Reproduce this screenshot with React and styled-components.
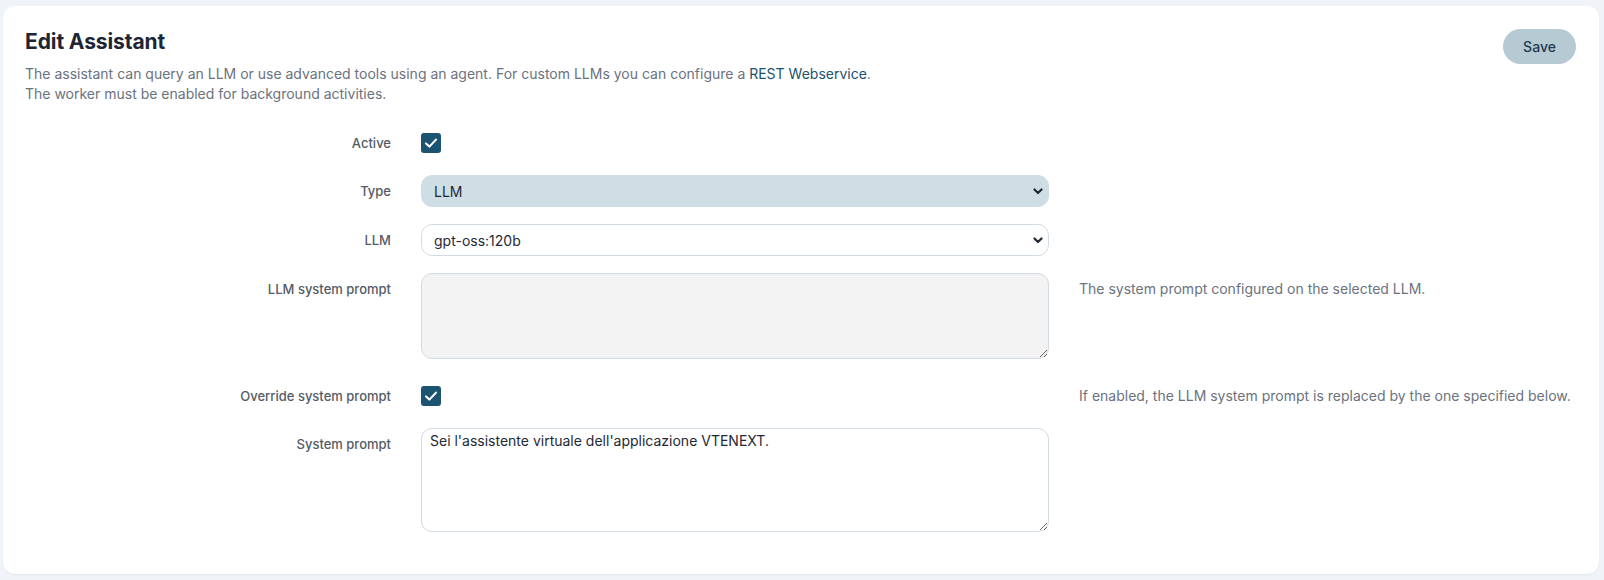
import React from 'react';
import styled, { createGlobalStyle } from 'styled-components';

const GlobalStyle = createGlobalStyle`
  html, body {
    margin: 0;
    padding: 0;
    background: #f0f3f7;
    font-family: Inter, "Noto Sans", sans-serif;
  }
`;

const Page = styled.div`
  padding: 6px 5px 6px 3px;
`;

const Card = styled.div`
  background: #ffffff;
  border-radius: 12px;
  box-shadow: 0 1px 2px rgba(15, 23, 42, 0.06);
  padding: 22px 20px 37px 22px;
  min-height: 509px;
`;

const Header = styled.div`
  display: flex;
  justify-content: space-between;
  align-items: flex-start;
`;

const Title = styled.h1`
  margin: 0 0 8px 0;
  font-size: 21px;
  line-height: 28px;
  font-weight: 700;
  color: #1e2533;
  letter-spacing: -0.1px;
`;

const Description = styled.p`
  margin: 0;
  font-size: 14px;
  line-height: 20px;
  color: #6b7280;
`;

const Link = styled.a`
  color: #1b5370;
  text-decoration: none;
`;

const SaveButton = styled.button`
  margin-top: 1px;
  margin-right: 3px;
  width: 73px;
  height: 35px;
  border: none;
  border-radius: 18px;
  background: #b5cad3;
  color: #1d3b50;
  font-family: Inter, sans-serif;
  font-size: 14px;
  font-weight: 500;
  cursor: pointer;
`;

const Form = styled.div`
  display: grid;
  grid-template-columns: 366px 628px 1fr;
  column-gap: 30px;
  row-gap: 17px;
  margin-top: 24px;
`;

const Label = styled.div`
  text-align: right;
  font-size: 13px;
  font-weight: 500;
  color: #555b66;
  line-height: ${(p) => p.$lh || 32}px;
`;

const Field = styled.div`
  display: flex;
  align-items: ${(p) => (p.$center ? 'center' : 'flex-start')};
  height: ${(p) => (p.$h ? `${p.$h}px` : 'auto')};
  padding-bottom: ${(p) => p.$pb || 0}px;
`;

const Help = styled.div`
  font-size: 14px;
  color: #6b7280;
  line-height: ${(p) => p.$lh || 32}px;
`;

const Checkbox = styled.span`
  width: 20px;
  height: 20px;
  border-radius: 3px;
  background: #1b5370;
  display: inline-flex;
  align-items: center;
  justify-content: center;
`;

const SelectWrap = styled.div`
  position: relative;
  width: 100%;
`;

const Select = styled.select`
  appearance: none;
  width: 100%;
  height: 32px;
  box-sizing: border-box;
  border-radius: 11px;
  border: 1px solid ${(p) => (p.$filled ? '#cfdee4' : '#d3dbe2')};
  background: ${(p) => (p.$filled ? '#cfdee4' : '#ffffff')};
  padding: 0 30px 0 12px;
  font-family: Inter, sans-serif;
  font-size: 14px;
  color: #1f2937;
  outline: none;
`;

const Chevron = styled.svg`
  position: absolute;
  right: 6px;
  top: 13px;
  pointer-events: none;
`;

const TextArea = styled.textarea`
  display: block;
  width: 100%;
  height: ${(p) => p.$h}px;
  box-sizing: border-box;
  border-radius: 11px;
  border: 1px solid #d3dbe2;
  background: ${(p) => (p.$disabled ? '#f3f3f3' : '#ffffff')};
  padding: 2px 8px;
  font-family: Inter, sans-serif;
  font-size: 14px;
  line-height: 20px;
  color: #1f2937;
  resize: vertical;
  outline: none;
`;

const Check = () => (
  <Checkbox>
    <svg width="16" height="16" viewBox="0 0 16 16">
      <path d="M3 8.4 L6.4 11.6 L13 4.6" fill="none" stroke="#fff" strokeWidth="2.1" strokeLinecap="round" strokeLinejoin="round" />
    </svg>
  </Checkbox>
);

const Dropdown = ({ value, filled }) => (
  <SelectWrap>
    <Select $filled={filled} defaultValue={value}>
      <option>{value}</option>
    </Select>
    <Chevron width="10" height="7" viewBox="0 0 10 7">
      <path d="M1.5 1.5 L5 5 L8.5 1.5" fill="none" stroke="#1f2937" strokeWidth="2.2" strokeLinecap="round" strokeLinejoin="round" />
    </Chevron>
  </SelectWrap>
);

export default function App() {
  return (
    <>
      <GlobalStyle />
      <Page>
        <Card>
          <Header>
            <div>
              <Title>Edit Assistant</Title>
              <Description>
                The assistant can query an LLM or use advanced tools using an agent. For custom LLMs you can configure a{' '}
                <Link href="#">REST Webservice</Link>.
                <br />
                The worker must be enabled for background activities.
              </Description>
            </div>
            <SaveButton>Save</SaveButton>
          </Header>

          <Form>
            <Label $lh={30}>Active</Label>
            <Field $center $h={30}>
              <Check />
            </Field>
            <div />

            <Label>Type</Label>
            <Field>
              <Dropdown value="LLM" filled />
            </Field>
            <div />

            <Label>LLM</Label>
            <Field>
              <Dropdown value="gpt-oss:120b" />
            </Field>
            <div />

            <Label>LLM system prompt</Label>
            <Field $pb={5}>
              <TextArea $h={86} $disabled readOnly defaultValue="" />
            </Field>
            <Help>The system prompt configured on the selected LLM.</Help>

            <Label $lh={30}>Override system prompt</Label>
            <Field $center $h={30}>
              <Check />
            </Field>
            <Help $lh={30}>If enabled, the LLM system prompt is replaced by the one specified below.</Help>

            <Label>System prompt</Label>
            <Field>
              <TextArea $h={104} defaultValue="Sei l'assistente virtuale dell'applicazione VTENEXT." />
            </Field>
            <div />
          </Form>
        </Card>
      </Page>
    </>
  );
}
